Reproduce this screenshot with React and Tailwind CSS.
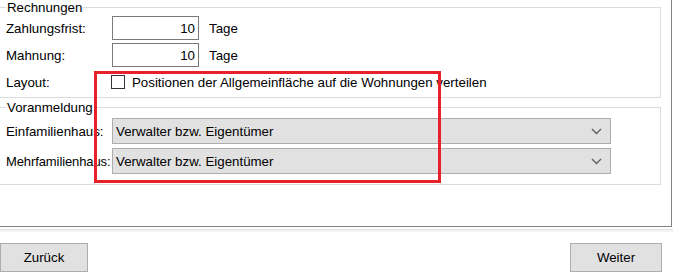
import React from 'react';

const Chevron = () => (
  <svg width="11" height="7" viewBox="0 0 11 7" className="shrink-0">
    <polyline points="1,1 5.5,5.5 10,1" fill="none" stroke="#606060" strokeWidth="1.4" />
  </svg>
);

const Combo = ({ value }) => (
  <div className="relative flex h-[26px] w-[499px] shrink-0 items-center justify-between border border-[#adadad] bg-[#e1e1e1] pl-[3px] pr-[8px]">
    <span>{value}</span>
    <Chevron />
  </div>
);

const NumBox = ({ value }) => (
  <div className="flex h-[24px] w-[87px] items-center justify-end border border-[#7a7a7a] bg-white pr-[3px]">
    {value}
  </div>
);

const App = () => {
  return (
    <div className="relative h-[280px] w-[673px] overflow-hidden bg-white font-['Liberation_Sans',Arial,sans-serif] text-[13.3px] leading-[15px] text-black">
      {/* main panel */}
      <div className="h-[227px] w-[672px] border-r border-b border-[#828282] pt-[7px]">
        {/* Rechnungen */}
        <div className="relative h-[91px] w-[661px] border-t border-r border-b border-[#dcdcdc] pt-[8px]">
          <span className="absolute -top-[8px] left-[6px] bg-white px-[1px]">Rechnungen</span>
          <div className="flex flex-col gap-[3px] pl-[6px]">
            <div className="flex h-[24px] items-center">
              <span className="w-[106px]">Zahlungsfrist:</span>
              <NumBox value="10" />
              <span className="ml-[10px]">Tage</span>
            </div>
            <div className="flex h-[24px] items-center">
              <span className="w-[106px]">Mahnung:</span>
              <NumBox value="10" />
              <span className="ml-[10px]">Tage</span>
            </div>
            <div className="flex h-[24px] items-center">
              <span className="w-[105px]">Layout:</span>
              <div className="h-[14px] w-[14px] border border-[#333333] bg-white"></div>
              <span className="ml-[7px]">Positionen der Allgemeinfläche auf die Wohnungen verteilen</span>
            </div>
          </div>
        </div>

        {/* Voranmeldung */}
        <div className="relative mt-[9px] h-[78px] w-[661px] border-t border-r border-b border-[#dcdcdc] pt-[10px]">
          <span className="absolute -top-[8px] left-[6px] bg-white px-[1px]">Voranmeldung</span>
          <div className="flex flex-col gap-[4px] pl-[6px]">
            <div className="flex items-center">
              <span className="w-[106px] shrink-0 whitespace-nowrap">Einfamilienhaus:</span>
              <Combo value="Verwalter bzw. Eigentümer" />
            </div>
            <div className="flex items-center">
              <span className="w-[106px] shrink-0 whitespace-nowrap text-[13px] tracking-[-0.1px]">Mehrfamilienhaus:</span>
              <Combo value="Verwalter bzw. Eigentümer" />
            </div>
          </div>
        </div>
      </div>

      {/* separator */}
      <div className="mt-[2px] h-[3px] w-full border-t border-[#e3e3e3] bg-[#f3f3f3]"></div>

      {/* buttons */}
      <div className="mt-[11px] flex justify-between pr-[11px]">
        <button className="h-[29px] w-[88px] border border-[#adadad] bg-[#e1e1e1]">Zurück</button>
        <button className="h-[29px] w-[92px] border border-[#adadad] bg-[#e1e1e1]">Weiter</button>
      </div>

      {/* red annotation frame */}
      <div className="absolute left-[94px] top-[71px] h-[112px] w-[347px] border-[3px] border-[#e8202a]"></div>
    </div>
  );
};

export default App;
